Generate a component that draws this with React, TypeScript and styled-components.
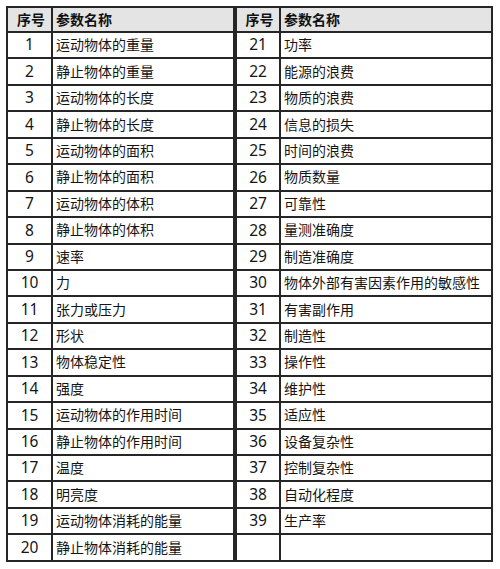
import styled, { createGlobalStyle } from "styled-components";

const GlobalStyle = createGlobalStyle`
    body {
        margin: 0;
        background: #ffffff;
        font-family: "Noto Sans", "Noto Sans CJK SC", sans-serif;
        color: #151515;
    }
`;

const left: [number, string][] = [
    [1, "运动物体的重量"],
    [2, "静止物体的重量"],
    [3, "运动物体的长度"],
    [4, "静止物体的长度"],
    [5, "运动物体的面积"],
    [6, "静止物体的面积"],
    [7, "运动物体的体积"],
    [8, "静止物体的体积"],
    [9, "速率"],
    [10, "力"],
    [11, "张力或压力"],
    [12, "形状"],
    [13, "物体稳定性"],
    [14, "强度"],
    [15, "运动物体的作用时间"],
    [16, "静止物体的作用时间"],
    [17, "温度"],
    [18, "明亮度"],
    [19, "运动物体消耗的能量"],
    [20, "静止物体消耗的能量"],
];

const right: [number | null, string][] = [
    [21, "功率"],
    [22, "能源的浪费"],
    [23, "物质的浪费"],
    [24, "信息的损失"],
    [25, "时间的浪费"],
    [26, "物质数量"],
    [27, "可靠性"],
    [28, "量测准确度"],
    [29, "制造准确度"],
    [30, "物体外部有害因素作用的敏感性"],
    [31, "有害副作用"],
    [32, "制造性"],
    [33, "操作性"],
    [34, "维护性"],
    [35, "适应性"],
    [36, "设备复杂性"],
    [37, "控制复杂性"],
    [38, "自动化程度"],
    [39, "生产率"],
    [null, ""],
];

const Page = styled.div`
    display: flex;
    padding: 6px 7px 0 6px;
`;

const Table = styled.table<{ $width: number; $numWidth: number }>`
    width: ${(p) => p.$width}px;
    border-collapse: collapse;
    table-layout: fixed;
    border: 2px solid #262626;

    col.num {
        width: ${(p) => p.$numWidth}px;
    }
`;

const HeadRow = styled.tr`
    height: 25px;
`;

const Row = styled.tr`
    height: 26.45px;
`;

const HeadCell = styled.th<{ $center?: boolean }>`
    padding: 0 0 0 3px;
    background: #e4e4e4;
    border: 2px solid #262626;
    font-size: 14px;
    font-weight: 700;
    text-align: ${(p) => (p.$center ? "center" : "left")};
    line-height: 1;
    color: #111111;
`;

const NumCell = styled.td`
    padding: 0;
    border: 2px solid #262626;
    font-size: 15.5px;
    text-align: center;
    line-height: 1;
`;

const NameCell = styled.td`
    padding: 0 0 0 3px;
    border: 2px solid #262626;
    font-size: 14px;
    text-align: left;
    line-height: 1;
    white-space: nowrap;
`;

function ParamTable({ rows, width, numWidth }: { rows: [number | null, string][]; width: number; numWidth: number }) {
    return (
        <Table $width={width} $numWidth={numWidth}>
            <colgroup>
                <col className="num" />
                <col />
            </colgroup>
            <thead>
                <HeadRow>
                    <HeadCell $center>序号</HeadCell>
                    <HeadCell>参数名称</HeadCell>
                </HeadRow>
            </thead>
            <tbody>
                {rows.map(([n, name], i) => (
                    <Row key={i}>
                        <NumCell>{n ?? ""}</NumCell>
                        <NameCell>{name}</NameCell>
                    </Row>
                ))}
            </tbody>
        </Table>
    );
}

export default function App() {
    return (
        <>
            <GlobalStyle />
            <Page>
                <ParamTable rows={left} width={229} numWidth={45} />
                <ParamTable rows={right} width={258} numWidth={44} />
            </Page>
        </>
    );
}
